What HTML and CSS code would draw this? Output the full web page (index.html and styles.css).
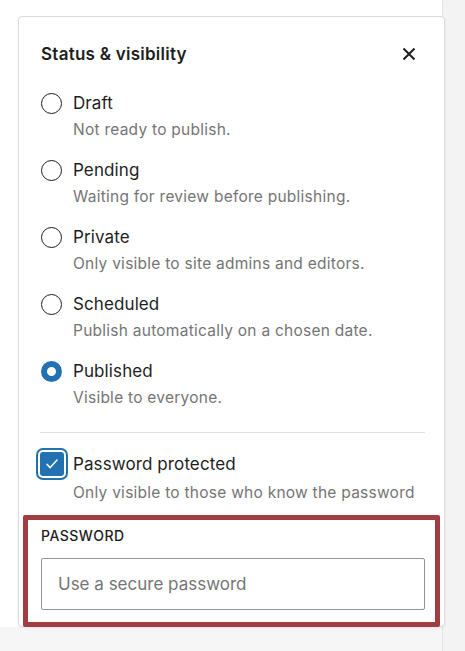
FILE: index.html
```html
<!DOCTYPE html>
<html lang="en">
<head>
<meta charset="utf-8">
<title>Status &amp; visibility</title>
<link rel="stylesheet" href="styles.css">
</head>
<body>
<div class="page">
  <div class="main">
    <div class="top-space"></div>
    <section class="popover">
      <header class="pop-head">
        <h2 class="pop-title">Status &amp; visibility</h2>
        <button class="close" aria-label="Close">
          <svg width="24" height="24" viewBox="0 0 24 24"><path d="M6.5 6.5l11 11M17.5 6.5l-11 11" stroke="#1e1e1e" stroke-width="2" fill="none"/></svg>
        </button>
      </header>
      <div class="options">
        <div class="option">
          <div class="opt-row"><span class="radio"></span><span class="opt-label">Draft</span></div>
          <p class="opt-desc">Not ready to publish.</p>
        </div>
        <div class="option">
          <div class="opt-row"><span class="radio"></span><span class="opt-label">Pending</span></div>
          <p class="opt-desc">Waiting for review before publishing.</p>
        </div>
        <div class="option">
          <div class="opt-row"><span class="radio"></span><span class="opt-label">Private</span></div>
          <p class="opt-desc">Only visible to site admins and editors.</p>
        </div>
        <div class="option">
          <div class="opt-row"><span class="radio"></span><span class="opt-label">Scheduled</span></div>
          <p class="opt-desc">Publish automatically on a chosen date.</p>
        </div>
        <div class="option">
          <div class="opt-row"><span class="radio checked"></span><span class="opt-label">Published</span></div>
          <p class="opt-desc">Visible to everyone.</p>
        </div>
      </div>
      <hr class="sep">
      <div class="option check-option">
        <div class="opt-row check-row">
          <span class="checkbox">
            <svg width="18" height="18" viewBox="0 0 18 18"><path d="M4 9.4l3.2 3.2 6.8-7.6" stroke="#fff" stroke-width="1.5" fill="none" stroke-linecap="round" stroke-linejoin="round"/></svg>
          </span>
          <span class="opt-label">Password protected</span>
        </div>
        <p class="opt-desc">Only visible to those who know the password</p>
      </div>
      <div class="pw-box">
        <label class="pw-label">PASSWORD</label>
        <div class="pw-input">Use a secure password</div>
      </div>
    </section>
    <div class="bottom-space"></div>
  </div>
  <div class="side"></div>
</div>
</body>
</html>
```
FILE: styles.css
```css
* { box-sizing: border-box; }
html, body { margin: 0; padding: 0; }
body {
  font-family: Inter, "Noto Sans", sans-serif;
  color: #1e1e1e;
  background: #f4f4f4;
  width: 465px;
  height: 651px;
  overflow: hidden;
}
.page {
  display: flex;
  height: 651px;
}
.main {
  width: 443px;
  flex: 0 0 443px;
  background: #fff;
  border-right: 1px solid #e2e2e2;
  display: flex;
  flex-direction: column;
}
.top-space { height: 16px; flex: 0 0 16px; }
.bottom-space { flex: 1; background: #f6f6f6; }
.side { flex: 1; background: #f3f3f3; }

.popover {
  position: relative;
  z-index: 1;
  margin-left: 18px;
  width: 427px;
  height: 611px;
  flex: 0 0 611px;
  background: #fff;
  border: 1px solid #dcdcdc;
  border-radius: 4px;
  box-shadow: 0 1px 3px rgba(0,0,0,0.06);
  padding: 25px 19px 0 22px;
  display: flex;
  flex-direction: column;
}
.pop-head {
  display: flex;
  align-items: center;
  justify-content: space-between;
  height: 24px;
  flex-shrink: 0;
}
.pop-title {
  margin: 0;
  font-size: 17px;
  font-weight: 600;
  line-height: 24px;
  letter-spacing: 0.25px;
  color: #1e1e1e;
}
.close {
  border: 0;
  background: none;
  padding: 0;
  width: 24px;
  height: 24px;
  margin-right: 4px;
  display: flex;
}
.options {
  margin-top: 25px;
  display: flex;
  flex-direction: column;
  gap: 18px;
  flex-shrink: 0;
}
.option { display: flex; flex-direction: column; flex-shrink: 0; }
.opt-row {
  display: flex;
  align-items: center;
  height: 24px;
  gap: 11px;
}
.radio {
  width: 21px;
  height: 21px;
  flex: 0 0 21px;
  border-radius: 50%;
  border: 1.5px solid #1e1e1e;
}
.radio.checked {
  border: 6.5px solid #2271b1;
  background: #fff;
}
.opt-label {
  font-size: 17px;
  line-height: 24px;
  letter-spacing: 0.1px;
  color: #1e1e1e;
}
.opt-desc {
  margin: 5px 0 0 32px;
  font-size: 15.5px;
  line-height: 20px;
  letter-spacing: 0.25px;
  color: #757575;
}
.sep {
  margin: 24px 0 0 -1px;
  border: 0;
  border-top: 1px solid #e0e0e0;
  width: 385px;
  height: 0;
  flex-shrink: 0;
}
.check-option { margin-top: 19px; }
.check-row { gap: 9px; }
.checkbox {
  width: 24px;
  height: 24px;
  flex: 0 0 24px;
  margin-left: -1px;
  border-radius: 3px;
  background: #2271b1;
  box-shadow: 0 0 0 2px #fff, 0 0 0 4px #2271b1;
  display: flex;
  align-items: center;
  justify-content: center;
}
.check-option .opt-desc { margin-top: 7px; }

.pw-box {
  margin: 12px -15px 0 -18px;
  height: 112px;
  flex: 0 0 112px;
  border: 5px solid #a23c43;
  border-radius: 2px;
  padding: 6px 10px 0 13px;
  display: flex;
  flex-direction: column;
}
.pw-label {
  font-size: 14px;
  font-weight: 500;
  line-height: 20px;
  letter-spacing: 0.5px;
  color: #1e1e1e;
}
.pw-input {
  margin-top: 12px;
  height: 52px;
  flex: 0 0 52px;
  width: 384px;
  border: 1px solid #949494;
  border-radius: 2px;
  padding: 0 16px;
  display: flex;
  align-items: center;
  font-size: 17px;
  color: #757575;
}
```
